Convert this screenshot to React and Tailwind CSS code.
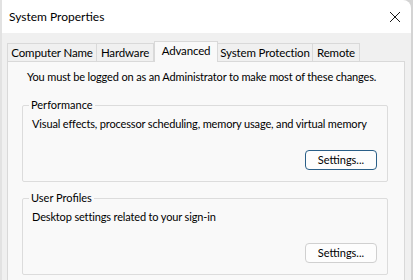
const font = { fontFamily: 'Lato, "Liberation Sans", Arial, sans-serif' };

function Tab({ label, width, selected }) {
  return (
    <div
      className={`flex items-center justify-center whitespace-nowrap border border-[#d9d9d9] text-[11.5px] tracking-[-0.15px] text-black ${
        selected
          ? 'h-[21px] -mb-px border-b-0 bg-[#f9f9f9] pb-[2px]'
          : 'h-[18px] border-b-0 bg-[#f0f0f0] -ml-px first:ml-0'
      }`}
      style={{ width }}
    >
      {label}
    </div>
  );
}

function Group({ title, text, focused, className }) {
  return (
    <fieldset className={`min-w-0 border border-[#dcdcdc] rounded-[2px] ml-[14px] mr-[16px] px-[9px] pb-[11px] ${className}`}>
      <legend className="-ml-[3px] px-[2px] text-[11px] leading-[14px] text-black">{title}</legend>
      <p className="whitespace-nowrap text-[11px] tracking-[-0.15px] leading-[16px] text-black pt-[4px]">{text}</p>
      <div className="flex justify-end pt-[18px] pr-[1px]">
        <button
          className={`w-[72px] h-[20px] rounded-[4px] bg-[#fdfdfd] text-[11px] text-black ${
            focused ? 'border border-[#2a5f88]' : 'border border-[#d0d0d0]'
          }`}
        >
          Settings...
        </button>
      </div>
    </fieldset>
  );
}

export default function App() {
  const tabs = [
    { label: 'Computer Name', width: 90 },
    { label: 'Hardware', width: 58 },
    { label: 'Advanced', width: 64, selected: true },
    { label: 'System Protection', width: 96 },
    { label: 'Remote', width: 48 },
  ];

  return (
    <div className="w-[413px] h-[280px] overflow-hidden bg-[#d4d4d4] flex" style={font}>
      <div className="w-[2px] h-full bg-[#e2e2e2]" />
      <div className="w-[409px] h-full flex flex-col rounded-tr-[8px] overflow-hidden">
        <div className="h-[33px] shrink-0 bg-white flex items-center justify-between pl-[7px] pr-[10px]">
          <span className="text-[12px] text-black">System Properties</span>
          <svg width="12" height="12" viewBox="0 0 12 12" fill="none">
            <path d="M1 1L11 11M11 1L1 11" stroke="#1a1a1a" strokeWidth="1" />
          </svg>
        </div>
        <div className="flex-1 bg-[#f0f0f0] pl-[5px] pr-[6px] pt-[7px]">
          <div className="flex items-end h-[21px] relative z-10">
            {tabs.map((t) => (
              <Tab key={t.label} {...t} />
            ))}
          </div>
          <div className="border border-[#d9d9d9] bg-[#f9f9f9] h-[240px]">
            <p className="whitespace-nowrap text-[11px] tracking-[-0.15px] leading-[16px] text-black pl-[19px] pt-[7px]">
              You must be logged on as an Administrator to make most of these changes.
            </p>
            <Group
              title="Performance"
              text="Visual effects, processor scheduling, memory usage, and virtual memory"
              focused
              className="mt-[13px]"
            />
            <Group
              title="User Profiles"
              text="Desktop settings related to your sign-in"
              className="mt-[9px]"
            />
          </div>
        </div>
      </div>
    </div>
  );
}
